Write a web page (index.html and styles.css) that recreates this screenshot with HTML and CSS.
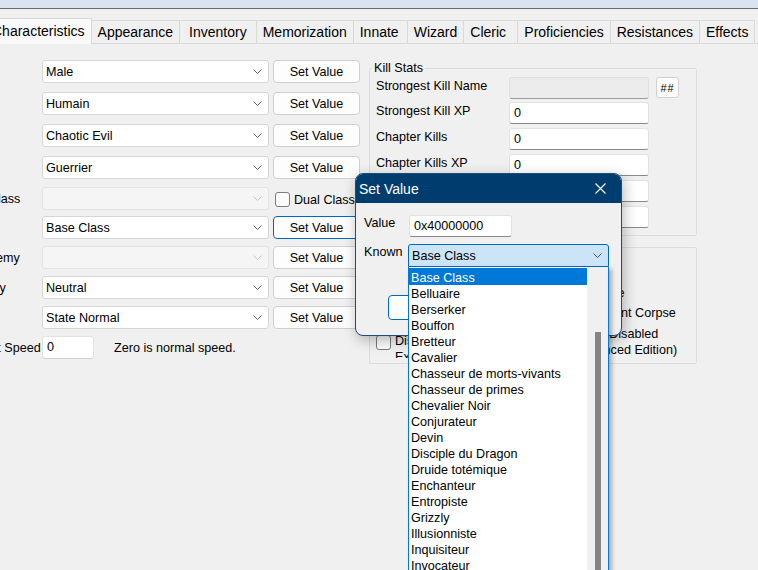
FILE: index.html
```html
<!DOCTYPE html>
<html lang="en">
<head>
<meta charset="utf-8">
<title>Characteristics</title>
<link rel="stylesheet" href="styles.css">
</head>
<body>
<div class="topstrip"></div>
<nav class="tabs">
  <div class="tab active">Characteristics</div>
  <div class="tab">Appearance</div>
  <div class="tab roomy">Inventory</div>
  <div class="tab">Memorization</div>
  <div class="tab">Innate</div>
  <div class="tab">Wizard</div>
  <div class="tab">Cleric</div>
  <div class="tab">Proficiencies</div>
  <div class="tab">Resistances</div>
  <div class="tab">Effects</div>
</nav>
<main class="page">
  <section class="form">
    <div class="row"><span class="lbl">Gender</span><div class="combo"><span>Male</span><svg class="chev" width="9" height="5" viewBox="0 0 9 5"><path d="M0.5 0.5 L4.5 4.5 L8.5 0.5" fill="none" stroke="#606060"/></svg></div><button class="btn">Set Value</button></div>
    <div class="row"><span class="lbl">Race</span><div class="combo"><span>Humain</span><svg class="chev" width="9" height="5" viewBox="0 0 9 5"><path d="M0.5 0.5 L4.5 4.5 L8.5 0.5" fill="none" stroke="#606060"/></svg></div><button class="btn">Set Value</button></div>
    <div class="row"><span class="lbl">Alignment</span><div class="combo"><span>Chaotic Evil</span><svg class="chev" width="9" height="5" viewBox="0 0 9 5"><path d="M0.5 0.5 L4.5 4.5 L8.5 0.5" fill="none" stroke="#606060"/></svg></div><button class="btn">Set Value</button></div>
    <div class="row g8"><span class="lbl">Class</span><div class="combo"><span>Guerrier</span><svg class="chev" width="9" height="5" viewBox="0 0 9 5"><path d="M0.5 0.5 L4.5 4.5 L8.5 0.5" fill="none" stroke="#606060"/></svg></div><button class="btn">Set Value</button></div>
    <div class="row g6"><span class="lbl">Original Class</span><div class="combo disabled"><span></span><svg class="chev" width="9" height="5" viewBox="0 0 9 5"><path d="M0.5 0.5 L4.5 4.5 L8.5 0.5" fill="none" stroke="#c4c4c4"/></svg></div><label class="check dual"><span class="box"></span><span>Dual Class</span></label></div>
    <div class="row g7"><span class="lbl">Kit</span><div class="combo"><span>Base Class</span><svg class="chev" width="9" height="5" viewBox="0 0 9 5"><path d="M0.5 0.5 L4.5 4.5 L8.5 0.5" fill="none" stroke="#606060"/></svg></div><button class="btn focus">Set Value</button></div>
    <div class="row g7"><span class="lbl">Racial Enemy</span><div class="combo disabled"><span></span><svg class="chev" width="9" height="5" viewBox="0 0 9 5"><path d="M0.5 0.5 L4.5 4.5 L8.5 0.5" fill="none" stroke="#c4c4c4"/></svg></div><button class="btn">Set Value</button></div>
    <div class="row g7"><span class="lbl">Enemy-Ally</span><div class="combo"><span>Neutral</span><svg class="chev" width="9" height="5" viewBox="0 0 9 5"><path d="M0.5 0.5 L4.5 4.5 L8.5 0.5" fill="none" stroke="#606060"/></svg></div><button class="btn">Set Value</button></div>
    <div class="row g7"><span class="lbl">State</span><div class="combo"><span>State Normal</span><svg class="chev" width="9" height="5" viewBox="0 0 9 5"><path d="M0.5 0.5 L4.5 4.5 L8.5 0.5" fill="none" stroke="#606060"/></svg></div><button class="btn">Set Value</button></div>
    <div class="row"><span class="lbl">Movement Speed</span><div class="input speed">0</div><span class="note">Zero is normal speed.</span></div>
  </section>

  <section class="right">
    <fieldset class="group kills">
      <legend>Kill Stats</legend>
      <div class="krow"><span class="klbl">Strongest Kill Name</span><div class="input field disabled"></div><button class="hash">##</button></div>
      <div class="krow"><span class="klbl">Strongest Kill XP</span><div class="input field">0</div></div>
      <div class="krow"><span class="klbl">Chapter Kills</span><div class="input field">0</div></div>
      <div class="krow"><span class="klbl">Chapter Kills XP</span><div class="input field">0</div></div>
      <div class="krow"><span class="klbl">Game Kills</span><div class="input field">0</div></div>
      <div class="krow"><span class="klbl">Game Kills XP</span><div class="input field">0</div></div>
    </fieldset>
    <div class="group flags">
      <div class="frow"><label class="check c1"><span class="box"></span><span>Hide In Party</span></label><label class="check c2"><span class="box"></span><span>Hidden</span></label></div>
      <div class="frow mid"><label class="check c1"><span class="box"></span><span>Unselectable</span></label><label class="check c2"><span class="box"></span><span>Moveable</span></label></div>
      <div class="frow"><label class="check c1"><span class="box"></span><span>Invulnerable</span></label><label class="check c2"><span class="box"></span><span>Permanent Corpse</span></label></div>
      <div class="frow tall"><label class="check c1 top"><span class="box"></span><span>Disable Exclude From<br>Export</span></label><label class="check c2"><span class="box"></span><span>Dialog Disabled<br>(Enhanced Edition)</span></label></div>
    </div>
  </section>
</main>

<div class="dialog">
  <div class="dtitle"><span>Set Value</span><svg class="close" width="11" height="11" viewBox="0 0 11 11"><path d="M0.5 0.5 L10.5 10.5 M10.5 0.5 L0.5 10.5" stroke="#ffffff" stroke-width="1.1" fill="none"/></svg></div>
  <div class="dbody">
    <div class="drow"><span class="dlbl">Value</span><div class="input dval">0x40000000</div></div>
    <div class="drow known"><span class="dlbl">Known</span><div class="combo dcombo"><span>Base Class</span><svg class="chev" width="9" height="5" viewBox="0 0 9 5"><path d="M0.5 0.5 L4.5 4.5 L8.5 0.5" fill="none" stroke="#505050"/></svg></div></div>
    <div class="dbtns"><button class="btn ok">OK</button><button class="btn">Cancel</button></div>
  </div>
</div>

<div class="dropdown">
  <ul class="items">
    <li class="sel">Base Class</li>
    <li>Belluaire</li>
    <li>Berserker</li>
    <li>Bouffon</li>
    <li>Bretteur</li>
    <li>Cavalier</li>
    <li>Chasseur de morts-vivants</li>
    <li>Chasseur de primes</li>
    <li>Chevalier Noir</li>
    <li>Conjurateur</li>
    <li>Devin</li>
    <li>Disciple du Dragon</li>
    <li>Druide totémique</li>
    <li>Enchanteur</li>
    <li>Entropiste</li>
    <li>Grizzly</li>
    <li>Illusionniste</li>
    <li>Inquisiteur</li>
    <li>Invocateur</li>
    <li>Kensai</li>
  </ul>
  <div class="scroll"><div class="thumb"></div></div>
</div>
</body>
</html>
```

FILE: styles.css
```css
* { box-sizing: border-box; }
html, body { margin: 0; padding: 0; }
body {
  width: 758px;
  height: 570px;
  overflow: hidden;
  position: relative;
  background: #f0f0f0;
  color: #000;
  font-family: "Liberation Sans", Arial, sans-serif;
  font-size: 12.6px;
}

.topstrip {
  height: 9px;
  background: #d9e4f0;
  border-bottom: 1px solid #6b6b6b;
}

/* tabs */
.tabs {
  display: flex;
  align-items: flex-end;
  height: 35px;
  margin-left: -15px;
  border-bottom: 1px solid #d9d9d9;
}
.tab {
  height: 23px;
  min-width: 54px;
  padding: 0 6px;
  border-top: 1px solid #d9d9d9;
  border-right: 1px solid #d9d9d9;
  background: #f0f0f0;
  font-size: 14px;
  line-height: 22px;
  white-space: nowrap;
}
.tab.roomy { padding: 0 9px; }
.tab.active {
  height: 26px;
  margin-bottom: -1px;
  background: #f9f9f9;
  border-left: 1px solid #d9d9d9;
  line-height: 25px;
}

/* page */
.page {
  display: flex;
  padding-top: 16px;
}
.form {
  flex: none;
  width: 418px;
  margin-left: -58px;
}
.row {
  display: flex;
  align-items: center;
  height: 23px;
  margin-bottom: 9px;
}
.row.g8 { margin-bottom: 8px; }
.row.g7 { margin-bottom: 7px; }
.row.g6 { margin-bottom: 6px; }
.lbl {
  flex: none;
  width: 100px;
  white-space: nowrap;
  overflow: hidden;
}
.combo {
  flex: none;
  width: 227px;
  height: 23px;
  display: flex;
  align-items: center;
  justify-content: space-between;
  padding: 0 6px 0 3px;
  background: #fff;
  border: 1px solid #d6d6d6;
  border-radius: 3px;
  white-space: nowrap;
}
.combo.disabled {
  background: #f5f5f5;
  border-color: #e3e3e3;
}
.chev { flex: none; display: block; }
.btn {
  flex: none;
  width: 87px;
  height: 23px;
  margin-left: 4px;
  padding: 0;
  background: #fdfdfd;
  border: 1px solid #d0d0d0;
  border-radius: 4px;
  font: inherit;
  color: #000;
}
.btn.focus { border-color: #0067c0; }

.check {
  display: flex;
  align-items: center;
  white-space: nowrap;
}
.box {
  flex: none;
  width: 15px;
  height: 15px;
  margin-right: 4px;
  background: #fbfbfb;
  border: 1px solid #7c7c7c;
  border-radius: 3px;
}
.check.dual { margin-left: 6px; padding-top: 2px; }

.input {
  height: 23px;
  padding: 0 4px;
  background: #fff;
  border: 1px solid #e2e2e2;
  border-bottom-color: #8a8a8a;
  border-radius: 3px;
  line-height: 21px;
  white-space: nowrap;
}
.input.speed {
  flex: none;
  width: 52px;
  border-bottom-color: #d0d0d0;
}
.note { margin-left: 20px; white-space: nowrap; }

/* right column */
.right {
  flex: none;
  width: 328px;
  margin-left: 9px;
}
.group {
  margin: 0;
  border: 1px solid #dcdcdc;
  border-radius: 2px;
}
.kills {
  padding: 1px 0 7px 6px;
  min-inline-size: 0;
}
.kills legend {
  padding: 0 2px;
  margin-left: -4px;
  line-height: 16px;
}
.krow {
  display: flex;
  align-items: flex-start;
  height: 22px;
  margin-top: 4px;
}
.krow:first-of-type { margin-top: 0; }
.krow:nth-of-type(2) { margin-top: 3px; }
.klbl {
  flex: none;
  width: 133px;
  padding-top: 1px;
  line-height: 16px;
  white-space: nowrap;
}
.input.field {
  flex: none;
  width: 140px;
  height: 22px;
  line-height: 20px;
}
.input.field.disabled {
  background: #ececec;
  border-color: #e0e0e0;
  border-bottom-color: #9a9a9a;
}
.hash {
  flex: none;
  width: 23px;
  height: 21px;
  margin-left: 7px;
  padding: 0;
  background: #fdfdfd;
  border: 1px solid #d0d0d0;
  border-radius: 3px;
  font: inherit;
  font-size: 11px;
  letter-spacing: 1px;
  color: #000;
}

.flags {
  height: 117px;
  margin-top: 11px;
  padding: 14px 0 0 6px;
}
.frow {
  display: flex;
  height: 20px;
}
.frow.mid { height: 21px; }
.frow.tall { height: 38px; }
.c1 { flex: none; width: 175px; }
.c2 { flex: none; line-height: 16px; }
.c1.top {
  align-items: flex-start;
  padding-top: 10px;
  height: 35px;
  overflow: hidden;
  line-height: 16px;
}
.c1.top .box { margin-top: 2px; }

/* dialog */
.dialog {
  position: absolute;
  left: 355px;
  top: 173px;
  width: 267px;
  height: 163px;
  background: #f0f0f0;
  border: 1px solid #1f4b78;
  border-radius: 8px;
  overflow: hidden;
  box-shadow: 2px 4px 14px rgba(0, 0, 0, 0.28);
}
.dtitle {
  height: 29px;
  display: flex;
  align-items: center;
  justify-content: space-between;
  padding: 0 15px 0 3px;
  background: #003d6f;
  color: #fff;
  font-size: 14px;
}
.close { display: block; }
.dbody {
  padding: 12px 0 0 8px;
}
.drow {
  display: flex;
  align-items: flex-start;
}
.dlbl {
  flex: none;
  width: 45px;
  line-height: 16px;
}
.input.dval {
  width: 103px;
  height: 22px;
  line-height: 20px;
}
.drow.known { margin-top: 7px; }
.combo.dcombo {
  width: 201px;
  margin-left: -1px;
  background: #cce4f7;
  border-color: #0067c0;
  border-radius: 3px 3px 0 0;
}
.dbtns {
  display: flex;
  gap: 8px;
  margin-top: 28px;
  padding-left: 24px;
}
.dbtns .btn {
  width: 75px;
  height: 25px;
  margin-left: 0;
}
.btn.ok { border-color: #0067c0; }

/* dropdown list */
.dropdown {
  position: absolute;
  left: 408px;
  top: 267px;
  width: 201px;
  height: 320px;
  display: flex;
  background: #fff;
  border: 1px solid #0078d4;
  border-top: none;
  box-shadow: 3px 2px 4px rgba(0, 0, 0, 0.28);
}
.items {
  list-style: none;
  margin: 0;
  padding: 1px 0 0 0;
  width: 178px;
  flex: none;
}
.items li {
  height: 16px;
  line-height: 20px;
  padding-left: 2px;
  white-space: nowrap;
}
.items li.sel {
  height: 17px;
  margin-bottom: -1px;
  background: #0078d7;
  color: #fff;
}
.scroll {
  flex: 1;
  background: #f0f0f0;
  padding: 65px 0 0 8px;
}
.thumb {
  width: 6px;
  height: 260px;
  background: #858585;
}
```
